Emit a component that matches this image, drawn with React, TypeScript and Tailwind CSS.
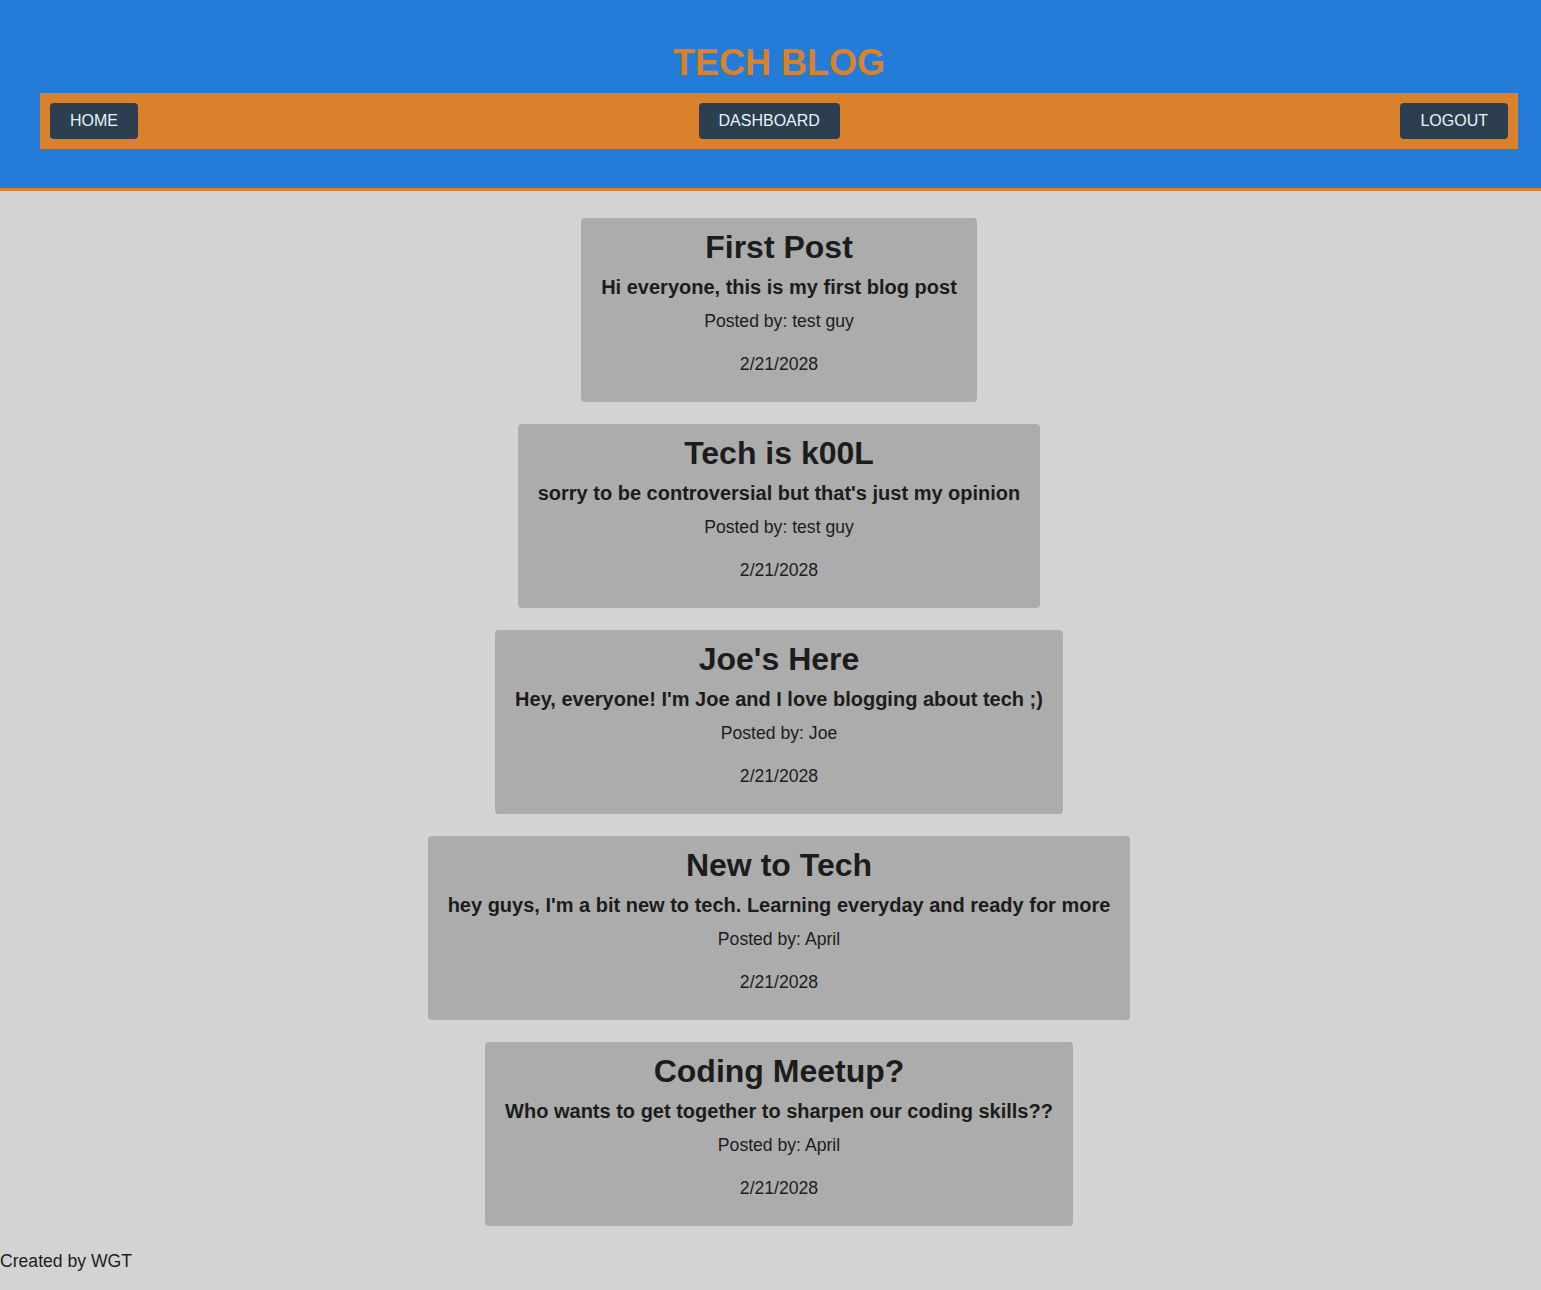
import React from "react";

const posts = [
  { title: "First Post", body: "Hi everyone, this is my first blog post", author: "test guy" },
  { title: "Tech is k00L", body: "sorry to be controversial but that's just my opinion", author: "test guy" },
  { title: "Joe's Here", body: "Hey, everyone! I'm Joe and I love blogging about tech ;)", author: "Joe" },
  { title: "New to Tech", body: "hey guys, I'm a bit new to tech. Learning everyday and ready for more", author: "April" },
  { title: "Coding Meetup?", body: "Who wants to get together to sharpen our coding skills??", author: "April" },
];

function NavButton({ label }: { label: string }) {
  return (
    <button className="h-[36px] px-[20px] rounded-[4px] bg-[#2d3e50] text-[#e3f6f8] text-[16px] leading-[18px]">
      {label}
    </button>
  );
}

export default function App() {
  return (
    <div className="min-h-[1290px] bg-[#d3d3d3] text-[#1c1c1c] font-['Liberation_Sans',Arial,sans-serif]">
      <header className="bg-[#247cd8] border-b-[3px] border-[#d9822b] pt-[42px] pb-[39px] pl-[40px] pr-[23px]">
        <h1 className="text-center text-[36px] leading-[41px] font-bold text-[#d9822b]">TECH BLOG</h1>
        <nav className="mt-[10px] bg-[#d9822b] p-[10px] flex justify-between items-center">
          <NavButton label="HOME" />
          <NavButton label="DASHBOARD" />
          <NavButton label="LOGOUT" />
        </nav>
      </header>
      <main className="pt-[27px] pl-[17px] flex flex-col items-center gap-[22px]">
        {posts.map((p) => (
          <div key={p.title} className="bg-[#acacac] rounded-[4px] px-[20px] pt-[11px] pb-[28px] text-center">
            <h2 className="text-[32px] leading-[37px] font-bold">{p.title}</h2>
            <h3 className="mt-[10px] text-[20px] leading-[23px] font-bold">{p.body}</h3>
            <p className="mt-[12px] text-[17.6px] leading-[20px]">Posted by: {p.author}</p>
            <p className="mt-[23px] text-[17.6px] leading-[20px]">2/21/2028</p>
          </div>
        ))}
      </main>
      <footer className="mt-[25px] pb-[20px] text-[17.6px] leading-[20px]">Created by WGT</footer>
    </div>
  );
}
